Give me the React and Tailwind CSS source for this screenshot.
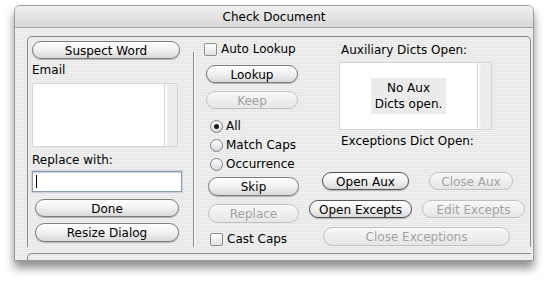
import React from 'react';

function Btn({ label, className = '', disabled = false }) {
    const tone = disabled
        ? 'border-[#c2c2c2] text-[#a3a3a3] from-[#f8f8f8] to-[#e6e6e6]'
        : 'border-[#7d7d7d] text-black from-[#ffffff] via-[#f1f1f1] to-[#d9d9d9] shadow-[0_1px_1px_rgba(0,0,0,0.25)]';
    return (
        <div className={`flex items-center justify-center rounded-full border bg-linear-to-b leading-none pt-px ${tone} ${className}`}>
            {label}
        </div>
    );
}

function Check({ label, className = '' }) {
    return (
        <div className={`flex items-center h-[16px] ${className}`}>
            <div className="w-[13px] h-[13px] rounded-[2px] border border-[#8e8e8e] bg-linear-to-b from-[#ffffff] to-[#e2e2e2]" />
            <span className="ml-[4px]">{label}</span>
        </div>
    );
}

function Radio({ label, on = false, className = '' }) {
    return (
        <div className={`flex items-center h-[16px] ${className}`}>
            <div className="w-[13px] h-[13px] rounded-full border border-[#7f7f7f] bg-linear-to-b from-[#ffffff] to-[#d3d8e0] flex items-center justify-center">
                {on && <div className="w-[5px] h-[5px] rounded-full bg-[#1a1a1a]" />}
            </div>
            <span className="ml-[3px]">{label}</span>
        </div>
    );
}

function ListBox({ className = '', white = '', children }) {
    return (
        <div className={`flex ${className}`}>
            <div className={`bg-white border border-[#d6d6d6] flex items-center justify-center ${white}`}>{children}</div>
            <div className="flex-1 bg-[#ececec] border-y border-r border-[#d6d6d6] shadow-[inset_2px_0_2px_rgba(255,255,255,0.9)]" />
        </div>
    );
}

export default function App() {
    return (
        <div className="w-[550px] h-[283px] bg-white pl-[14px] pt-[5px] font-['DejaVu_Sans',Verdana,sans-serif] text-[12px] text-black">
            <div className="w-[520px] h-[256px] rounded-t-[6px] border border-[#9c9c9c] shadow-[0_7px_10px_rgba(0,0,0,0.45)] overflow-hidden flex flex-col bg-[repeating-linear-gradient(to_bottom,#f0f0f0_0px,#f0f0f0_1px,#e7e7e7_1px,#e7e7e7_2px)]">
                <div className="h-[22px] shrink-0 border-b border-[#a5a5a5] bg-linear-to-b from-[#f0f0f0] to-[#d8d8d8] flex items-center justify-center">
                    Check Document
                </div>
                <div className="flex-1 pl-[12px] pt-[8px]">
                    <div className="w-[504px] h-[211px] border-t border-l border-r border-[#8c8c8c] rounded-t-[5px] pl-[4px] pt-[4px] flex">
                        {/* left column */}
                        <div className="w-[150px] flex flex-col">
                            <Btn label="Suspect Word" className="w-[148px] h-[18px]" />
                            <div className="mt-[3px] h-[16px] leading-[16px]">Email</div>
                            <ListBox className="mt-[5px] w-[146px] h-[64px]" white="w-[133px]" />
                            <div className="mt-[5px] h-[16px] leading-[16px]">Replace with:</div>
                            <div className="mt-[3px] w-[150px] h-[21px] bg-white border border-[#8d9db6] shadow-[0_0_0_1px_#c9d3e2,inset_0_1px_1px_rgba(0,0,0,0.2)] flex items-center pl-[3px]">
                                <div className="w-px h-[13px] bg-black" />
                            </div>
                            <Btn label="Done" className="mt-[7px] ml-[3px] w-[144px] h-[18px]" />
                            <Btn label="Resize Dialog" className="mt-[6px] ml-[3px] w-[144px] h-[19px]" />
                        </div>

                        <div className="ml-[11px] mt-[11px] w-[2px] h-[195px] border-l border-[#8c8c8c] bg-white/70" />

                        {/* middle column */}
                        <div className="ml-[9px] w-[95px] flex flex-col">
                            <Check label="Auto Lookup" />
                            <Btn label="Lookup" className="mt-[8px] ml-[2px] w-[92px] h-[18px]" />
                            <Btn label="Keep" disabled className="mt-[8px] ml-[2px] w-[92px] h-[18px]" />
                            <Radio label="All" on className="mt-[9px] ml-[6px]" />
                            <Radio label="Match Caps" className="mt-[3px] ml-[6px]" />
                            <Radio label="Occurrence" className="mt-[3px] ml-[6px]" />
                            <Btn label="Skip" className="mt-[5px] ml-[4px] w-[91px] h-[19px]" />
                            <Btn label="Replace" disabled className="mt-[8px] ml-[4px] w-[91px] h-[19px]" />
                            <Check label="Cast Caps" className="mt-[8px] ml-[6px]" />
                        </div>

                        {/* right column */}
                        <div className="ml-[10px] w-[216px] flex flex-col">
                            <div className="mt-[1px] ml-[32px] h-[16px] leading-[16px]">Auxiliary Dicts Open:</div>
                            <ListBox className="mt-[4px] ml-[30px] w-[153px] h-[68px]" white="w-[139px]">
                                <div className="w-[75px] h-[36px] bg-[#ebebeb] flex flex-col items-center justify-center leading-[16px]">
                                    <span>No Aux</span>
                                    <span>Dicts open.</span>
                                </div>
                            </ListBox>
                            <div className="mt-[3px] ml-[32px] h-[16px] leading-[16px]">Exceptions Dict Open:</div>
                            <div className="mt-[23px] flex">
                                <Btn label="Open Aux" className="ml-[13px] w-[87px] h-[18px] border-[#555]" />
                                <Btn label="Close Aux" disabled className="ml-[20px] w-[84px] h-[18px]" />
                            </div>
                            <div className="mt-[10px] flex">
                                <Btn label="Open Excepts" className="w-[103px] h-[18px] border-[#555]" />
                                <Btn label="Edit Excepts" disabled className="ml-[10px] w-[103px] h-[18px]" />
                            </div>
                            <Btn label="Close Exceptions" disabled className="mt-[9px] ml-[14px] w-[187px] h-[19px]" />
                        </div>
                    </div>
                    <div className="mt-[6px] w-[504px] h-[10px] border-t border-l border-[#8c8c8c] rounded-tl-[5px]" />
                </div>
            </div>
        </div>
    );
}
